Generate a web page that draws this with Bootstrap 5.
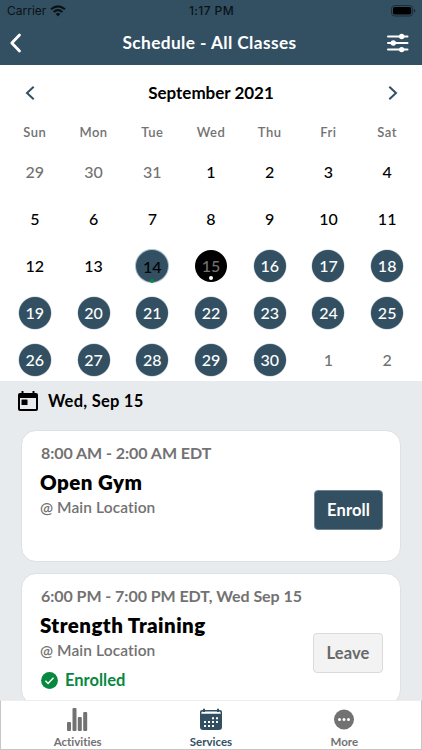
<!DOCTYPE html>
<html lang="en">
<head>
<meta charset="utf-8">
<meta name="viewport" content="width=device-width, initial-scale=1">
<title>Schedule - All Classes</title>
<link href="https://cdn.jsdelivr.net/npm/bootstrap@5.3.0/dist/css/bootstrap.min.css" rel="stylesheet">
<style>
:root{--navy:#335063;--gray:#727272;--green:#07883f}
body{font-family:Lato,"Open Sans",sans-serif;color:#000;background:#e8ebed;line-height:1.2;font-variant-ligatures:none}
.screen{height:750px}
svg{display:block;flex:none}
.top{background:var(--navy);height:65px}
.status{height:21px;font:12px/21px Inter,sans-serif;color:#0a1216;padding:0 6px 0 7px}
.status>*{flex:1 1 0}
.clock{font-weight:500;letter-spacing:.4px}
.titlebar{height:44px;padding:0 13px 0 9px}
.title{font-size:17.3px;letter-spacing:.4px;margin-left:-4px}
.calendar{height:316px;padding:0 5.5px}
.month{height:56px;padding:0 18px}
.month-name{font-size:17px;letter-spacing:-.02px}
.week{display:grid;grid-template-columns:repeat(7,1fr);height:47px;place-items:center}
.week:not(.names){padding-bottom:2px}
.names{height:28px;font-size:13px;font-weight:600;color:var(--gray);letter-spacing:.5px;padding-bottom:4px}
.day{width:32px;height:32px;font-size:16px;font-weight:500;line-height:32px;text-align:center;position:relative}
.out{color:var(--gray)}
.open{background:var(--navy);color:#fff;box-shadow:0 0 0 .5px #b9c3cb}
.mine{color:#000;line-height:34px;box-shadow:0 0 0 1px #a9bccb}
.now{background:#000;color:#727272}
.dot{position:absolute;left:14px;bottom:2px;width:4px;height:4px;border-radius:50%;background:#fff}
.mine .dot{bottom:-1px;background:var(--green)}
.date{height:49px;padding:10px 0 0 18px;font-size:16.5px;gap:10px}
.date-text{line-height:21px;letter-spacing:.25px}
.session{margin:0 21px 11px;height:132px;border:1px solid #dde1e3;border-radius:15px;padding:11px 17px 0 18px}
.time{font-size:16px;line-height:21px;color:var(--gray);padding-left:1px;letter-spacing:-.05px}
.name{font-size:20.5px;line-height:26px;font-weight:800;margin-top:6px;letter-spacing:.45px}
.place{font-size:15.5px;line-height:20px;font-weight:600;color:var(--gray);margin-top:2px;letter-spacing:.1px}
.act{width:69px;height:40px;font-size:16.5px;font-weight:700;padding:0;border-radius:4px;margin-top:48px;letter-spacing:.1px}
.act-on,.act-on:hover{background:var(--navy);color:#fff;border:1px solid #6f8390}
.act-off,.act-off:hover{width:70px;background:#f3f3f3;color:#696969;border:1px solid #dadada}
.list{height:320px;overflow:hidden}
.enrolled{color:var(--green);font-size:16.5px;line-height:20px;margin-top:10px;gap:7px;padding-left:1px}
.tabs{height:50px;border:1px solid #c6c6c6;border-top-color:#eee;background:#fff}
.tab-item{width:133.33px;font-size:11.5px;color:var(--gray);padding-top:7px;font-weight:700}
.tab-item span{line-height:15px;margin-top:2.5px}
.chosen{color:var(--navy)}
</style>
</head>
<body>
<div class="screen d-flex flex-column overflow-hidden">
<header class="top">
 <div class="status d-flex align-items-center">
  <div class="d-flex align-items-center gap-1"><span>Carrier</span>
   <svg width="16" height="12" viewBox="0 0 16 12" fill="none" stroke="#0a1216" stroke-width="2.1"><path d="M1 4.3Q8-1.5 15 4.3M3.6 7Q8 3.3 12.4 7"/><path d="M8 11.5 5.5 8.8Q8 7 10.5 8.8Z" fill="#0a1216" stroke="none"/></svg></div>
  <div class="clock text-center">1:17 PM</div>
  <div class="d-flex justify-content-end"><svg width="25" height="12" viewBox="0 0 25 12"><rect x=".6" y=".6" width="21" height="10.4" rx="3" fill="none" stroke="#1b2a34"/><rect x="2" y="2" width="18.2" height="7.6" rx="1.8"/><path d="M23 4v3.6q1.3-.5 1.3-1.8T23 4" fill="#17232b"/></svg></div>
 </div>
 <div class="titlebar d-flex align-items-center justify-content-between text-white">
  <svg width="28" height="20" viewBox="0 0 28 20" fill="none" stroke="#fff" stroke-width="2.8" stroke-linecap="round" stroke-linejoin="round"><path d="M10.5 2 2.8 10l7.7 8"/></svg>
  <div class="title fw-bold">Schedule - All Classes</div>
  <svg width="23" height="20" viewBox="0 0 23 20" stroke="#fff" stroke-width="2" stroke-linecap="round"><path d="M2 3.5h19.5M2 10h19.5M2 16.6h19.5"/><g fill="#fff" stroke="none"><circle cx="15.7" cy="3.5" r="2.7"/><circle cx="7.3" cy="10" r="2.7"/><circle cx="15.7" cy="16.6" r="2.7"/></g></svg>
 </div>
</header>
<section class="calendar bg-white">
 <div class="month d-flex align-items-center justify-content-between">
  <svg width="12" height="16" viewBox="0 0 12 16" fill="none" stroke="#335063" stroke-width="2"><path d="M9.7 1.7 3 8l6.7 6.3"/></svg>
  <div class="month-name fw-bold">September 2021</div>
  <svg width="12" height="16" viewBox="0 0 12 16" fill="none" stroke="#335063" stroke-width="2"><path d="M2.3 1.7 9 8l-6.7 6.3"/></svg>
 </div>
 <div class="week names"><span>Sun</span><span>Mon</span><span>Tue</span><span>Wed</span><span>Thu</span><span>Fri</span><span>Sat</span></div>
 <div class="week"><div class="day out">29</div><div class="day out">30</div><div class="day out">31</div><div class="day">1</div><div class="day">2</div><div class="day">3</div><div class="day">4</div></div>
 <div class="week"><div class="day">5</div><div class="day">6</div><div class="day">7</div><div class="day">8</div><div class="day">9</div><div class="day">10</div><div class="day">11</div></div>
 <div class="week"><div class="day">12</div><div class="day">13</div><div class="day rounded-circle open mine">14<i class="dot"></i></div><div class="day rounded-circle now">15<i class="dot"></i></div><div class="day rounded-circle open">16</div><div class="day rounded-circle open">17</div><div class="day rounded-circle open">18</div></div>
 <div class="week"><div class="day rounded-circle open">19</div><div class="day rounded-circle open">20</div><div class="day rounded-circle open">21</div><div class="day rounded-circle open">22</div><div class="day rounded-circle open">23</div><div class="day rounded-circle open">24</div><div class="day rounded-circle open">25</div></div>
 <div class="week"><div class="day rounded-circle open">26</div><div class="day rounded-circle open">27</div><div class="day rounded-circle open">28</div><div class="day rounded-circle open">29</div><div class="day rounded-circle open">30</div><div class="day out">1</div><div class="day out">2</div></div>
</section>
<main class="list">
 <div class="date d-flex align-items-start fw-bold">
  <svg width="20" height="21" viewBox="0 0 20 21"><path fill-rule="evenodd" d="M2 2h1.5V0h2v2h9V0h2v2H18q2 0 2 2v14q0 2-2 2H2q-2 0-2-2V4q0-2 2-2M2 7v11h16V7ZM3.7 8.7h5.6v5.2H3.7Z"/><path d="M3.7 8.7h5.6v5.2H3.7Z"/></svg>
  <span class="date-text">Wed, Sep 15</span>
 </div>
 <article class="session bg-white d-flex justify-content-between align-items-start">
  <div class="text-nowrap"><div class="time fw-bold">8:00 AM - 2:00 AM EDT</div><div class="name">Open Gym</div><div class="place">@ Main Location</div></div>
  <button class="btn act act-on">Enroll</button>
 </article>
 <article class="session bg-white d-flex justify-content-between align-items-start">
  <div class="text-nowrap"><div class="time fw-bold">6:00 PM - 7:00 PM EDT, Wed Sep 15</div><div class="name">Strength Training</div><div class="place">@ Main Location</div>
   <div class="enrolled d-flex align-items-center fw-bold"><svg width="17" height="17" viewBox="0 0 17 17"><circle cx="8.5" cy="8.5" r="8.4" fill="#07883f"/><path d="m4.4 8.8 2.7 2.7 5.4-5.8" fill="none" stroke="#fff" stroke-width="1.5"/></svg><span>Enrolled</span></div></div>
  <button class="btn act act-off">Leave</button>
 </article>
</main>
<nav class="tabs d-flex justify-content-center flex-shrink-0">
 <div class="tab-item d-flex flex-column align-items-center"><svg width="21" height="23" viewBox="0 0 21 23" fill="#727272"><rect y="14" width="4" height="9" rx="1"/><rect x="5.5" width="4" height="23" rx="1"/><rect x="10.8" y="9" width="4" height="14" rx="1"/><rect x="16.2" y="4" width="4" height="19" rx="1"/></svg><span>Activities</span></div>
 <div class="tab-item chosen d-flex flex-column align-items-center"><svg width="22" height="23" viewBox="0 0 22 23"><path fill="#335063" d="M2 2h1V.8h2V2h12V.8h2V2h1q2 0 2 2v15q0 3-3 3H3q-3 0-3-3V4q0-2 2-2"/><path fill="#fff" d="M1.2 5.8Q1.2 3.4 3 3.4V4h2v-.6h12V4h2v-.6q1.8 0 1.8 2.4Z"/><path stroke="#fff" stroke-width="2" stroke-dasharray="2 2" d="M12 10.2h6M4 14.1h14M4 18h10"/></svg><span>Services</span></div>
 <div class="tab-item d-flex flex-column align-items-center"><svg width="20" height="23" viewBox="0 0 20 23"><circle cx="10" cy="11.5" r="10" fill="#727272"/><g fill="#fff"><circle cx="5.5" cy="11.5" r="1.5"/><circle cx="10" cy="11.5" r="1.5"/><circle cx="14.5" cy="11.5" r="1.5"/></g></svg><span>More</span></div>
</nav>
</div>
<script src="https://cdn.jsdelivr.net/npm/bootstrap@5.3.0/dist/js/bootstrap.bundle.min.js"></script>
</body>
</html>
